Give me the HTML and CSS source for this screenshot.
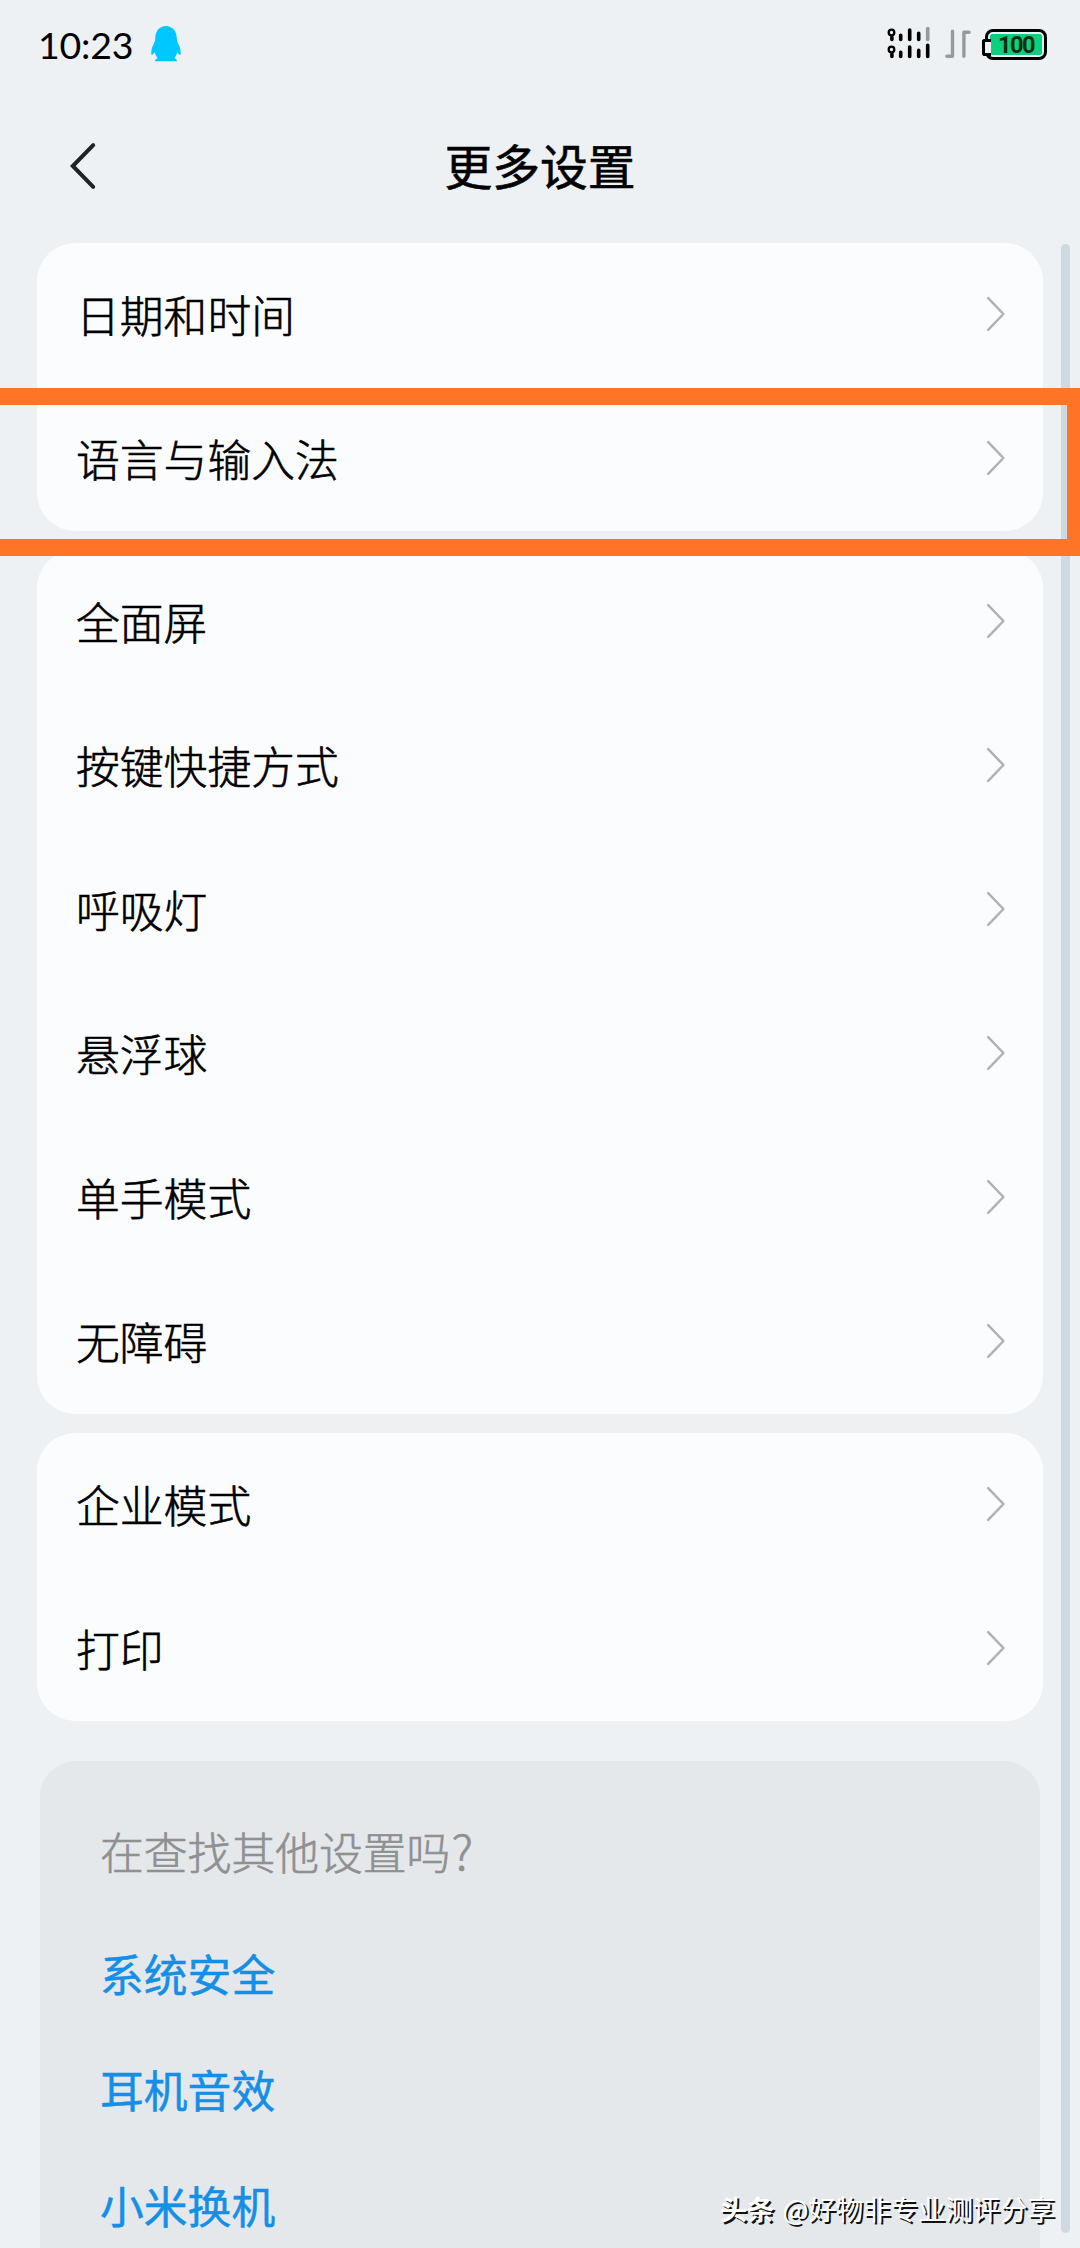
FILE: index.html
```html
<!DOCTYPE html>
<html lang="zh-CN">
<head>
  <meta charset="UTF-8" />
  <meta name="viewport" content="width=device-width, initial-scale=1.0"/>
  <title>更多设置</title>
  <link rel="stylesheet" href="styles.css">
</head>
<body>

  <svg class="symbols" width="0" height="0">
    <symbol id="arrow" viewBox="0 0 20 36">
      <path d="M2.2 2.2 L17.4 18 L2.2 33.8" fill="none" stroke="#b0b1b2" stroke-width="2.5" stroke-linecap="round" stroke-linejoin="round"/>
    </symbol>
  </svg>

  <div class="screen">
    <header class="status-bar">
      <div class="status-left">
        <span class="clock">10:23</span>
        <svg class="qq" width="32" height="38" viewBox="0 0 32 38">
          <path fill="#00c8ff" d="M16 1 C9.500 1 5.500 6 5.300 12.500 C5.200 15.500 4.700 17 3.500 19.300 C1.800 22.500 .8 26.500 1.400 29.700 C2.600 30.200 3.800 28.500 4.700 27.300 C5.200 29.300 6.100 31.500 7.700 33.200 C6 33.900 5 34.900 5 36.200 L27 36.200 C27 34.900 26 33.900 24.300 33.200 C25.900 31.500 26.800 29.300 27.300 27.300 C28.200 28.500 29.400 30.200 30.600 29.700 C31.200 26.500 30.200 22.500 28.500 19.300 C27.300 17 26.800 15.500 26.700 12.500 C26.500 6 22.500 1 16 1 Z"/>
        </svg>
      </div>
      <div class="status-right">
        <svg class="signal" width="44" height="34" viewBox="0 0 44 34">
          <g fill="none" stroke="#000" stroke-width="3.6" stroke-linecap="round">
            <circle cx="4.500" cy="6.500" r="2.800" stroke-width="2.300"/>
            <path d="M4.900 11 V13.500 M13.700 9.300 V13.500 M22.700 4 V13.500 M31.700 7.200 V13.500"/>
            <path d="M40.700 2.500 V13.500" stroke="#98999b"/>
            <circle cx="4.500" cy="23.500" r="2.800" stroke-width="2.300"/>
            <path d="M4.900 28 V30.500 M13.700 26.300 V30.500 M22.700 21 V30.500 M31.700 24.200 V30.500 M40.700 19.200 V30.500"/>
          </g>
        </svg>
        <svg class="traffic" width="26" height="30" viewBox="0 0 26 30">
          <path d="M1.900 27.200 H7.500 V2.200 M18.900 27.200 V3.200 H24.100" fill="none" stroke="#98999b" stroke-width="3.400" stroke-linecap="round" stroke-linejoin="round"/>
        </svg>
        <div class="battery"><span>100</span></div>
      </div>
    </header>

    <div class="title-bar">
      <svg class="back" width="28" height="48" viewBox="0 0 28 48">
        <path d="M24.200 3.200 L3.800 24 L24.200 44.800" fill="none" stroke="#202224" stroke-width="4" stroke-linecap="round" stroke-linejoin="miter"/>
      </svg>
      <h1>更多设置</h1>
    </div>

    <main class="content">
      <ul class="card">
        <li>日期和时间<svg class="arrow"><use href="#arrow"/></svg></li>
        <li>语言与输入法<svg class="arrow"><use href="#arrow"/></svg></li>
      </ul>
      <ul class="card">
        <li>全面屏<svg class="arrow"><use href="#arrow"/></svg></li>
        <li>按键快捷方式<svg class="arrow"><use href="#arrow"/></svg></li>
        <li>呼吸灯<svg class="arrow"><use href="#arrow"/></svg></li>
        <li>悬浮球<svg class="arrow"><use href="#arrow"/></svg></li>
        <li>单手模式<svg class="arrow"><use href="#arrow"/></svg></li>
        <li>无障碍<svg class="arrow"><use href="#arrow"/></svg></li>
      </ul>
      <ul class="card">
        <li>企业模式<svg class="arrow"><use href="#arrow"/></svg></li>
        <li>打印<svg class="arrow"><use href="#arrow"/></svg></li>
      </ul>
      <section class="more">
        <p>在查找其他设置吗<span class="mark">?</span></p>
        <a>系统安全</a>
        <a>耳机音效</a>
        <a>小米换机</a>
      </section>
    </main>

    <div class="scrollbar"></div>
    <div class="highlight"></div>
    <div class="watermark"><b>头条</b> @好物非专业测评分享</div>
  </div>

</body>
</html>
```

FILE: styles.css
```css
* {
  box-sizing: border-box;
}

body {
  margin: 0;
  background: #edf1f4;
  color: #000;
  font-family: "Noto Sans CJK SC", sans-serif;
}

.symbols {
  position: absolute;
}

.screen {
  position: relative;
  width: 1080px;
  height: 2248px;
  overflow: hidden;
}

.status-bar {
  display: flex;
  justify-content: space-between;
  height: 88px;
  padding: 0 33px 0 38px;
}

.status-left,
.status-right {
  display: flex;
  align-items: center;
}

.clock {
  font-family: Lato, sans-serif;
  font-size: 37.5px;
  line-height: 46px;
  letter-spacing: -0.2px;
  width: 112px;
  padding-top: 2px;
}

.status-right {
  align-items: flex-start;
  padding-top: 26px;
}

.traffic {
  margin: 3px 11px 0 14px;
}

.battery {
  position: relative;
  width: 62px;
  height: 31px;
  margin: 3px 0 0 3px;
  padding: 2px;
  border: 3px solid #000;
  border-radius: 8px;
  background: #edf1f4;
}

.battery::before {
  content: "";
  position: absolute;
  left: -6px;
  top: 7px;
  width: 6px;
  height: 11px;
  border: 3px solid #000;
  border-right: none;
  border-radius: 3px 0 0 3px;
  background: #edf1f4;
}

.battery span {
  display: block;
  height: 21px;
  border-radius: 2px;
  background: #0bd17f;
  color: #042d10;
  font: bold 23.5px/22px Roboto, sans-serif;
  letter-spacing: -1.4px;
  text-align: center;
}

.title-bar {
  display: grid;
  grid-template-columns: 69px 1fr 69px;
  align-items: center;
  height: 155px;
}

.back {
  grid-column: 2;
  grid-row: 1;
}

.title-bar h1 {
  grid-column: 2;
  grid-row: 1;
  margin: 0;
  padding-bottom: 2px;
  font-size: 47.8px;
  font-weight: 400;
  line-height: 64px;
  text-align: center;
  -webkit-text-stroke: 0.6px #000;
}

.content {
  padding: 0 37px;
}

.card {
  margin: 0 0 19px;
  padding: 0;
  list-style: none;
  background: #fbfcfe;
  border-radius: 38px;
}

.card li {
  display: flex;
  align-items: center;
  justify-content: space-between;
  height: 144px;
  padding: 0 37px 3px 39px;
  font-size: 43.8px;
  font-weight: 300;
  -webkit-text-stroke: 0.6px #000;
}

.arrow {
  width: 20px;
  height: 36px;
  margin-top: 1px;
}

.more {
  margin: 40px 3px 0;
  height: 520px;
  padding: 32px 60px;
  background: #e4e8eb;
  border-radius: 36px;
  font-size: 43.8px;
}

.more p {
  margin: 0 0 6px;
  line-height: 116px;
  font-weight: 300;
  color: #8e9092;
  -webkit-text-stroke: 0.6px #8e9092;
}

.mark {
  font-size: 48px;
  line-height: 1;
  margin-left: 1px;
}

.more a {
  display: block;
  line-height: 116px;
  color: #158fe6;
  -webkit-text-stroke: 0.5px #158fe6;
}

.scrollbar {
  position: absolute;
  left: 1061px;
  top: 244px;
  width: 9px;
  height: 1989px;
  border-radius: 5px;
  background: #cddae1;
}

/* marker frame around the language row, runs off both screen edges */
.highlight {
  position: absolute;
  left: -20px;
  top: 387.5px;
  width: 1104px;
  height: 168px;
  border: 17px solid #ff7427;
}

.watermark {
  position: absolute;
  right: 25px;
  bottom: 20px;
  color: #fff;
  font-size: 27.4px;
  line-height: 40px;
  white-space: nowrap;
  text-shadow: 2px 2px 0 #111;
}

.watermark b {
  margin-right: 2px;
}
```
